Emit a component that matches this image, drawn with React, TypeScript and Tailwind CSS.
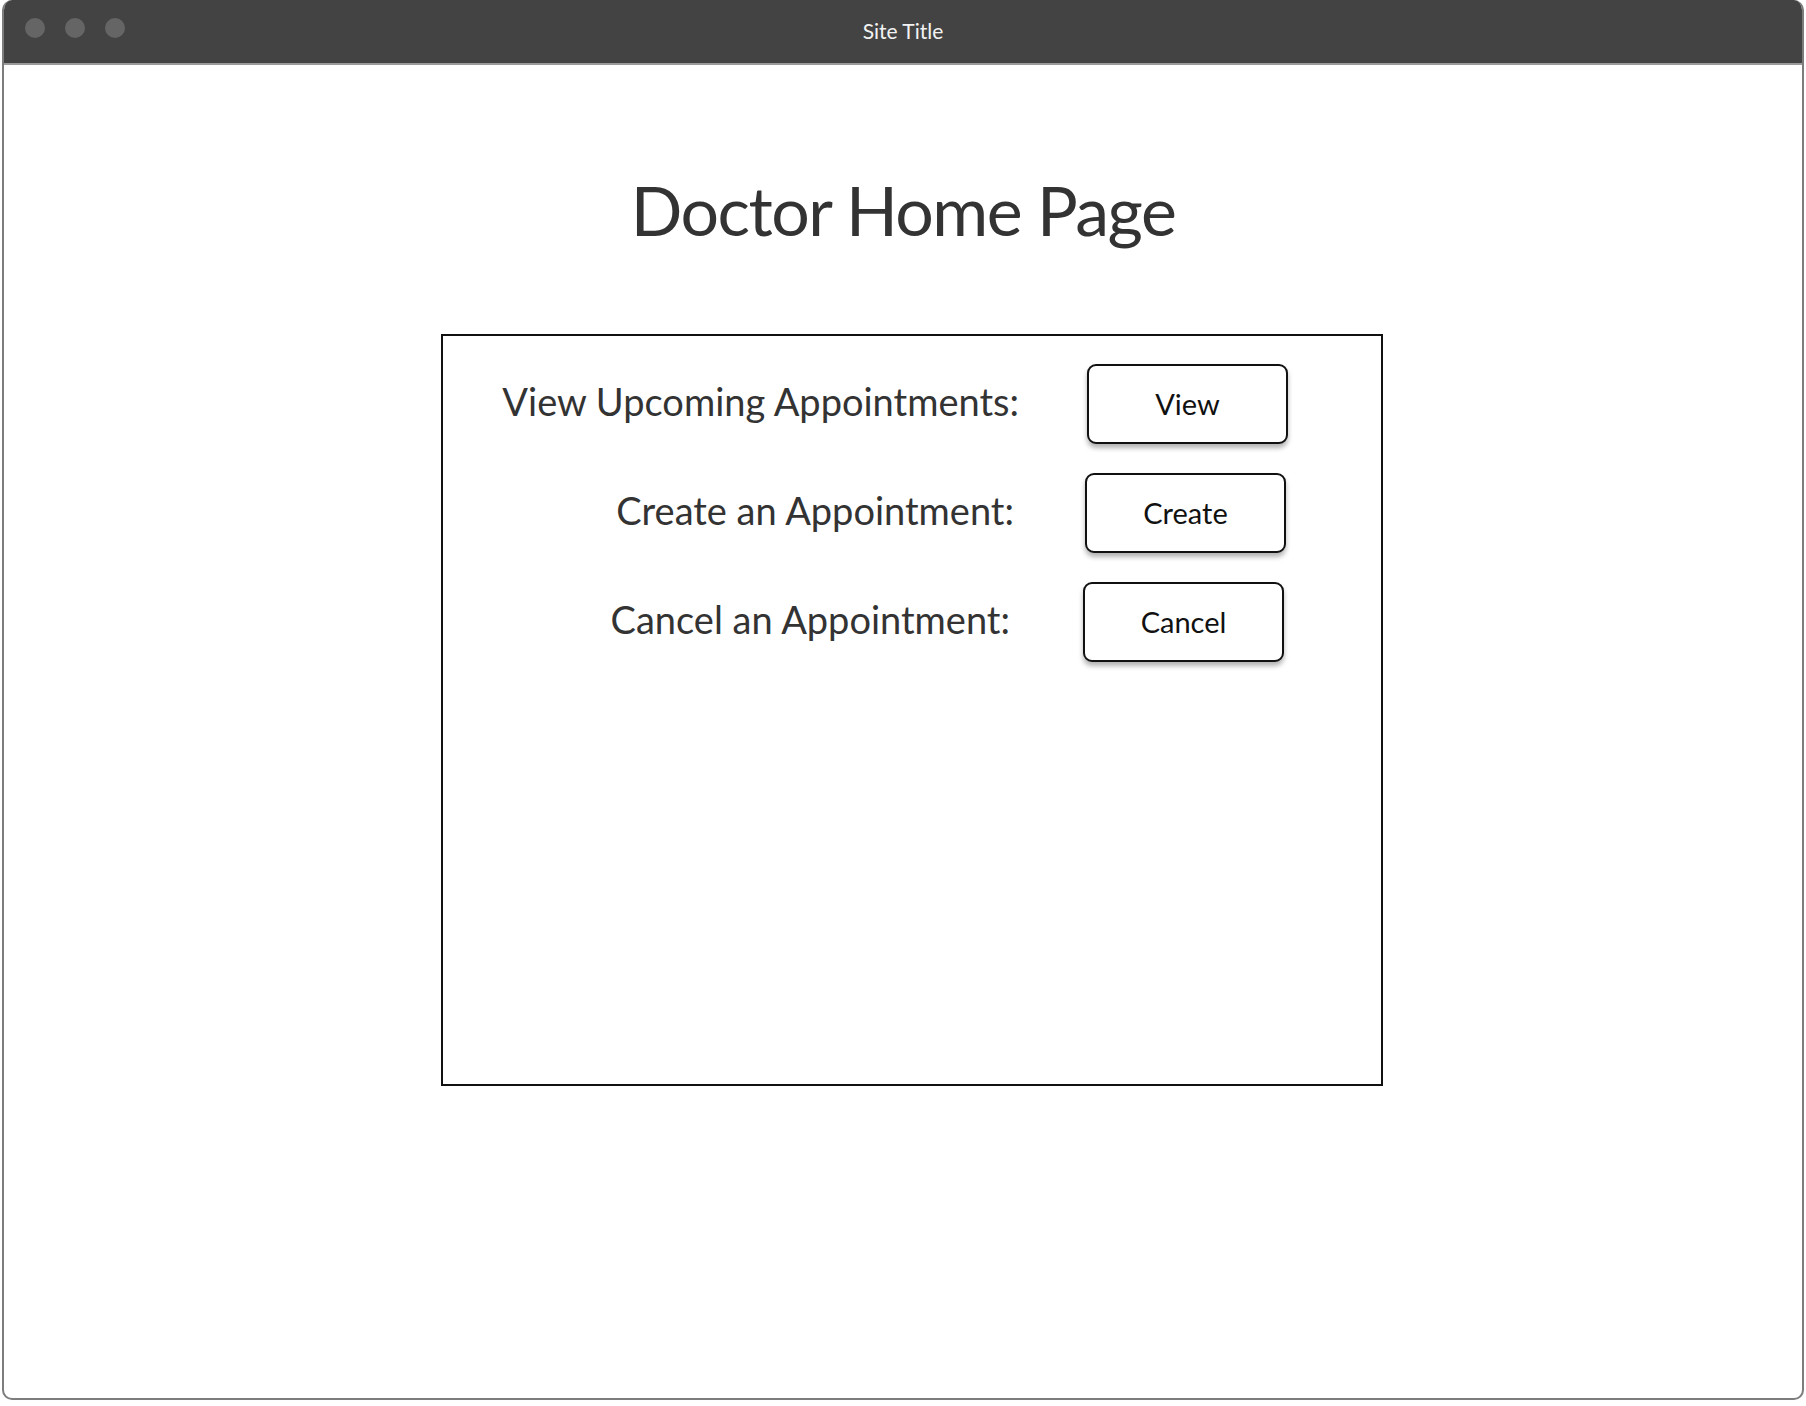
const font = { fontFamily: "Lato, 'Noto Sans', sans-serif" };

function Row({ label, action, labelW, gapL }: { label: string; action: string; labelW: string; gapL: string }) {
  return (
    <div className="flex items-center">
      <div className={`${labelW} text-right text-[38px] text-[#333333] pb-[6px] leading-none`}>{label}</div>
      <button
        className={`${gapL} w-[201px] h-[80px] rounded-[9px] border-2 border-[#111111] bg-white text-[29px] text-[#111111] shadow-[0_4px_5px_rgba(0,0,0,0.3)]`}
      >
        {action}
      </button>
    </div>
  );
}

export default function App() {
  return (
    <div className="w-[1806px] h-[1406px] bg-white" style={font}>
      <div className="ml-[2px] w-[1802px] h-[1400px] rounded-[10px] border-2 border-t-0 border-[#7d7d7d] overflow-hidden flex flex-col">
        <div className="relative h-[65px] bg-[#434343] border-b-2 border-[#9a9a9a] flex items-center justify-center shrink-0">
          <div className="absolute left-[21px] top-[18px] flex gap-[20px]">
            <span className="w-[20px] h-[20px] rounded-full bg-[#656565]" />
            <span className="w-[20px] h-[20px] rounded-full bg-[#656565]" />
            <span className="w-[20px] h-[20px] rounded-full bg-[#656565]" />
          </div>
          <span className="text-[21px] text-[#f2f2f2] pb-[2px]">Site Title</span>
        </div>

        <h1 className="mt-[111px] text-center text-[68px] tracking-[-1.5px] leading-none text-[#333333]">
          Doctor Home Page
        </h1>

        <div className="mt-[90px] ml-[437px] w-[942px] h-[752px] border-2 border-[#111111] pt-[28px] flex flex-col gap-[29px]">
          <Row label="View Upcoming Appointments:" action="View" labelW="w-[576px]" gapL="ml-[68px]" />
          <Row label="Create an Appointment:" action="Create" labelW="w-[571px]" gapL="ml-[71px]" />
          <Row label="Cancel an Appointment:" action="Cancel" labelW="w-[567px]" gapL="ml-[73px]" />
        </div>
      </div>
    </div>
  );
}
